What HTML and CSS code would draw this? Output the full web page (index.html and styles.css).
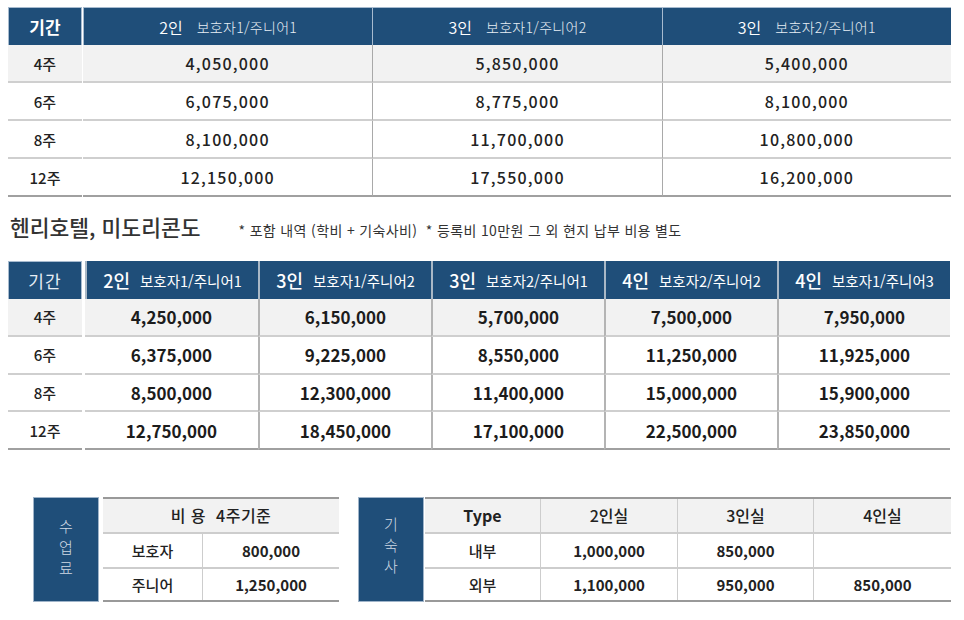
FILE: index.html
```html
<!DOCTYPE html>
<html lang="ko">
<head>
<meta charset="utf-8">
<link rel="stylesheet" href="styles.css">
</head>
<body>
<div class="page">
  <div class="tbl tbl-top">
    <div class="hd first">기간</div>
    <div class="hd"><span class="n">2인</span><span class="s">보호자1/주니어1</span></div>
    <div class="hd"><span class="n">3인</span><span class="s">보호자1/주니어2</span></div>
    <div class="hd"><span class="n">3인</span><span class="s">보호자2/주니어1</span></div>

    <div class="rl alt">4주</div><div class="c alt nb">4,050,000</div><div class="c alt">5,850,000</div><div class="c alt">5,400,000</div>
    <div class="rl">6주</div><div class="c nb">6,075,000</div><div class="c">8,775,000</div><div class="c">8,100,000</div>
    <div class="rl">8주</div><div class="c nb">8,100,000</div><div class="c">11,700,000</div><div class="c">10,800,000</div>
    <div class="rl last">12주</div><div class="c nb last">12,150,000</div><div class="c last">17,550,000</div><div class="c last">16,200,000</div>
  </div>

  <div class="title-row">
    <h2 class="title">헨리호텔, 미도리콘도</h2>
    <p class="note">* 포함 내역 (학비 + 기숙사비) &nbsp;* 등록비 10만원 그 외 현지 납부 비용 별도</p>
  </div>

  <div class="tbl tbl-mid">
    <div class="hd first">기간</div>
    <div class="hd"><span class="n">2인</span><span class="s">보호자1/주니어1</span></div>
    <div class="hd"><span class="n">3인</span><span class="s">보호자1/주니어2</span></div>
    <div class="hd"><span class="n">3인</span><span class="s">보호자2/주니어1</span></div>
    <div class="hd"><span class="n">4인</span><span class="s">보호자2/주니어2</span></div>
    <div class="hd"><span class="n">4인</span><span class="s">보호자1/주니어3</span></div>

    <div class="rl alt">4주</div><div class="c alt nb">4,250,000</div><div class="c alt">6,150,000</div><div class="c alt">5,700,000</div><div class="c alt">7,500,000</div><div class="c alt">7,950,000</div>
    <div class="rl">6주</div><div class="c nb">6,375,000</div><div class="c">9,225,000</div><div class="c">8,550,000</div><div class="c">11,250,000</div><div class="c">11,925,000</div>
    <div class="rl">8주</div><div class="c nb">8,500,000</div><div class="c">12,300,000</div><div class="c">11,400,000</div><div class="c">15,000,000</div><div class="c">15,900,000</div>
    <div class="rl last">12주</div><div class="c nb last">12,750,000</div><div class="c last">18,450,000</div><div class="c last">17,100,000</div><div class="c last">22,500,000</div><div class="c last">23,850,000</div>
  </div>

  <div class="bottom">
    <div class="box box-fee">
      <div class="side"><span>수</span><span>업</span><span>료</span></div>
      <div class="sub sub-fee">
        <div class="sh span2">비 용 &nbsp;4주기준</div>
        <div class="sl">보호자</div><div class="sv">800,000</div>
        <div class="sl lastr">주니어</div><div class="sv lastr">1,250,000</div>
      </div>
    </div>
    <div class="box box-dorm">
      <div class="side side-dorm"><span>기</span><span>숙</span><span>사</span></div>
      <div class="sub sub-dorm">
        <div class="sh nl">Type</div><div class="sh">2인실</div><div class="sh">3인실</div><div class="sh">4인실</div>
        <div class="sl nl">내부</div><div class="sv">1,000,000</div><div class="sv">850,000</div><div class="sv"></div>
        <div class="sl nl lastr">외부</div><div class="sv lastr">1,100,000</div><div class="sv lastr">950,000</div><div class="sv lastr">850,000</div>
      </div>
    </div>
  </div>
</div>
</body>
</html>
```

FILE: styles.css
```css
* { box-sizing: border-box; }
html, body { margin: 0; padding: 0; background: #fff; }
body {
  font-family: "Noto Sans CJK KR", "Noto Sans", sans-serif;
  color: #222;
  width: 964px;
  height: 620px;
  overflow: hidden;
}
.page { padding: 7px 13px 0 8px; }

.tbl { display: grid; }
.tbl-top { grid-template-columns: 75px repeat(3, 1fr); width: 943px; }
.tbl-mid { grid-template-columns: 77px repeat(5, 1fr); width: 942px; }

.hd {
  height: 38px;
  background: #1f4e79;
  color: #fff;
  display: flex;
  align-items: center;
  justify-content: center;
  border-top: 1px solid #a7bbcf;
  border-left: 1px solid #a7bbcf;
  white-space: nowrap;
}
.hd.first { border-right: 1px solid #a7bbcf; margin-right: 1px; }
.tbl-top .hd.first { font-weight: 700; font-size: 17px; }
.tbl-mid .hd.first { font-weight: 400; font-size: 17px; color: #e6edf4; letter-spacing: 1px; margin-right: 3px; }
.hd .n { font-size: 16px; font-weight: 350; margin-right: 14px; }
.hd .s { font-size: 14px; font-weight: 300; color: #e8eef5; letter-spacing: 0.3px; }
.tbl-mid .hd { border-left: 2px solid #a9b8c6; border-top: 0; }
.tbl-mid .hd.first { border: 1px solid #a7bbcf; border-bottom: 0; }
.tbl-mid .hd .n { font-size: 18px; font-weight: 500; margin-right: 10px; }
.tbl-mid .hd .s { font-size: 14.5px; font-weight: 400; color: #fff; letter-spacing: 0; }

.rl, .c {
  height: 38px;
  display: flex;
  align-items: center;
  justify-content: center;
  border-bottom: 2px solid #cfcfcf;
}
.rl { margin-right: 1px; font-size: 15px; font-weight: 500; color: #222; }
.tbl-mid .rl { margin-right: 3px; font-weight: 500; }
.c {
  border-left: 1px solid #a9a9a9;
  font-size: 16px;
  font-weight: 500;
  letter-spacing: 1.2px;
  color: #222;
}
.c.nb { border-left: 0; }
.alt { background: #f2f2f2; }
.last { border-bottom: 2px solid #a0a0a0; }
.tbl-mid .c { border-left: 2px solid #b4b4b4; font-size: 17px; font-weight: 700; letter-spacing: 0; color: #1c1c1c; }
.tbl-mid .c.nb { border-left: 0; }
.tbl-mid .c, .tbl-mid .rl { height: 37.75px; }

.title-row {
  display: flex;
  align-items: baseline;
  margin-top: 14px;
  height: 50px;
}
.title {
  margin: 0 0 0 2px;
  font-size: 21.5px;
  font-weight: 500;
  color: #333;
}
.note {
  margin: 0 0 0 38px;
  font-size: 14px;
  font-weight: 400;
  color: #333;
  letter-spacing: 0.35px;
}

.bottom {
  display: flex;
  margin-top: 47px;
  margin-left: 25px;
}
.box { display: flex; height: 105px; }
.side {
  background: #1f4e79;
  border: 1px solid #9fb4c9;
  width: 66px;
  color: #cfd9e4;
  font-weight: 300;
  font-size: 15px;
  line-height: 21px;
  display: flex;
  flex-direction: column;
  align-items: center;
  justify-content: center;
  padding-bottom: 6px;
}
.side-dorm { padding-bottom: 10px; }
.sub {
  display: grid;
  border-top: 2px solid #999;
  border-bottom: 2px solid #999;
}
.sub-fee { width: 236px; margin-left: 4px; grid-template-columns: 99px 1fr; grid-template-rows: 35px 35px 1fr; }
.box-dorm { margin-left: 19px; }
.sub-dorm { width: 526px; margin-left: 1px; grid-template-columns: 115px 137px 136px 1fr; grid-template-rows: 35px 35px 1fr; }
.sh {
  background: #f2f2f2;
  display: flex;
  align-items: center;
  justify-content: center;
  border-bottom: 2px solid #cdcdcd;
  border-left: 1px solid #cdcdcd;
  font-size: 16px;
  font-weight: 500;
  color: #222;
  padding-bottom: 1px;
}
.sh.span2 { grid-column: span 2; border-left: 0; letter-spacing: 0.5px; }
.sub-dorm .sh.nl { font-weight: 700; }
.sl, .sv {
  display: flex;
  align-items: center;
  justify-content: center;
  border-bottom: 2px solid #cdcdcd;
  font-size: 15px;
  font-weight: 500;
  padding-bottom: 1px;
}
.sv { border-left: 1px solid #cdcdcd; font-weight: 700; font-size: 15px; color: #222; }
.nl { border-left: 0; }
.lastr { border-bottom: 0; }
```
